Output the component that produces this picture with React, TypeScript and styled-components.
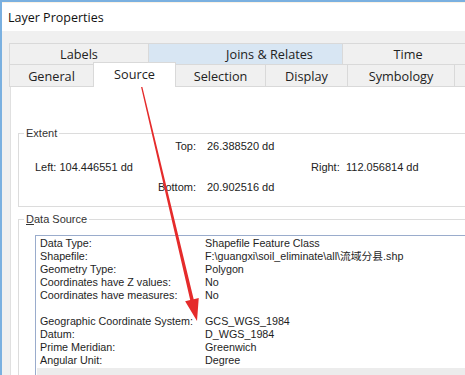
import * as React from "react";
import styled, { createGlobalStyle } from "styled-components";

const GlobalStyle = createGlobalStyle`
	html, body {
		margin: 0;
		padding: 0;
		overflow: hidden;
		background: #f0f0f0;
	}
`;

const Window = styled.div`
	position: relative;
	width: 463px;
	height: 373px;
	overflow: hidden;
	border-top: 2px solid #7ab0e0;
	border-left: 2px solid #7ab0e0;
	background: #f0f0f0;
	font-family: "Liberation Sans", "Noto Sans CJK SC", sans-serif;
	color: #1a1a1a;
`;

const TitleBar = styled.div`
	height: 28px;
	display: flex;
	align-items: center;
	padding-left: 6px;
	background: #ffffff;
	border-top: 1px solid #fbf2e4;
	font-family: "Open Sans", "Liberation Sans", sans-serif;
	font-size: 12.5px;
	color: #111;
`;

const Body = styled.div`
	padding: 12px 0 0 8px;
	width: 560px;
`;

const TabRow = styled.div<{ $h: number }>`
	display: flex;
	height: ${(p) => p.$h}px;
	align-items: stretch;
`;

const Tab = styled.div<{ $w: number; $active?: boolean; $hover?: boolean; $indent?: number }>`
	box-sizing: border-box;
	width: ${(p) => p.$w}px;
	flex: none;
	display: flex;
	align-items: center;
	justify-content: center;
	padding-left: ${(p) => p.$indent ?? 0}px;
	padding-bottom: ${(p) => (p.$active ? 3 : 0)}px;
	margin-top: ${(p) => (p.$active ? -2 : 0)}px;
	border: 1px solid #d9d9d9;
	border-bottom: ${(p) => (p.$active ? "none" : "1px solid #d9d9d9")};
	margin-left: -1px;
	background: ${(p) => (p.$active ? "#ffffff" : p.$hover ? "#d8e6f3" : "#f0f0f0")};
	font-family: "Open Sans", "Liberation Sans", sans-serif;
	font-size: 12.7px;
	color: #222;
	position: relative;
	z-index: ${(p) => (p.$active ? 1 : 0)};
`;

const Panel = styled.div`
	background: #ffffff;
	border-left: 1px solid #e0e0e0;
	margin-top: -1px;
	padding: 47px 0 0 7px;
	height: 300px;
	font-size: 11px;
`;

const GroupBox = styled.div<{ $gap?: number }>`
	border: 1px solid #dcdcdc;
	border-right: none;
	margin-top: ${(p) => p.$gap ?? 0}px;
	padding-bottom: ${(p) => (p.$gap ? 0 : 9)}px;
`;

const Caption = styled.div`
	width: fit-content;
	margin: -7px 0 -6px 5px;
	padding: 0 2px;
	background: #ffffff;
	line-height: 13px;
	font-size: 11px;
	color: #333;

	u {
		text-decoration: underline;
	}
`;

const ExtentGrid = styled.div`
	display: grid;
	grid-template-columns: 161px 11px 104px 35px 1fr;
	grid-template-rows: 20px 21px 20px;
	align-items: center;
	padding: 2px 0 0 16px;
	font-size: 11px;
	color: #222;
	white-space: nowrap;
`;

const Cell = styled.span<{ $col: number; $row: number; $right?: boolean }>`
	grid-column: ${(p) => p.$col};
	grid-row: ${(p) => p.$row};
	text-align: ${(p) => (p.$right ? "right" : "left")};
`;

const ListBox = styled.div`
	margin: 15px 0 0 16px;
	border: 1px solid #9aaccc;
	border-right: none;
	background: #ffffff;
	padding: 1px 0 0 4px;
	height: 200px;
`;

const InfoRow = styled.div`
	display: grid;
	grid-template-columns: 165px 1fr;
	height: 13px;
	line-height: 13px;
	font-size: 10.75px;
	color: #1e1e1e;
	white-space: nowrap;
`;

const Blank = styled.div`
	height: 13px;
`;

const ScrollStrip = styled.div`
	margin: 1px 0 0 -3px;
	height: 12px;
	background: #ececec;
`;

const Arrow = styled.svg`
	position: absolute;
	left: -2px;
	top: -2px;
	pointer-events: none;
`;

const rows1 = [
	{ label: "Labels", w: 140 },
	{ label: "Joins & Relates", w: 195, hover: true, indent: 48 },
	{ label: "Time", w: 132 },
];

const rows2 = [
	{ label: "General", w: 85 },
	{ label: "Source", w: 83, active: true },
	{ label: "Selection", w: 91 },
	{ label: "Display", w: 83 },
	{ label: "Symbology", w: 108 },
	{ label: "", w: 60 },
];

const info: ([string, string] | null)[] = [
	["Data Type:", "Shapefile Feature Class"],
	["Shapefile:", "F:\\guangxi\\soil_eliminate\\all\\流域分县.shp"],
	["Geometry Type:", "Polygon"],
	["Coordinates have Z values:", "No"],
	["Coordinates have measures:", "No"],
	null,
	["Geographic Coordinate System:", "GCS_WGS_1984"],
	["Datum:", "D_WGS_1984"],
	["Prime Meridian:", "Greenwich"],
	["Angular Unit:", "Degree"],
];

const App = () => {
	return (
		<React.Fragment>
			<GlobalStyle />
			<Window>
				<TitleBar>Layer Properties</TitleBar>
				<Body>
					<TabRow $h={22}>
						{rows1.map((t) => (
							<Tab key={t.label} $w={t.w} $hover={t.hover} $indent={t.indent}>
								{t.label}
							</Tab>
						))}
					</TabRow>
					<TabRow $h={23} style={{ marginTop: -1 }}>
						{rows2.map((t, i) => (
							<Tab key={i} $w={t.w} $active={t.active}>
								{t.label}
							</Tab>
						))}
					</TabRow>
					<Panel>
						<GroupBox>
							<Caption>Extent</Caption>
							<ExtentGrid>
								<Cell $col={1} $row={1} $right>Top:</Cell>
								<Cell $col={3} $row={1}>26.388520 dd</Cell>
								<Cell $col={1} $row={2}>Left: 104.446551 dd</Cell>
								<Cell $col={4} $row={2}>Right:</Cell>
								<Cell $col={5} $row={2}>112.056814 dd</Cell>
								<Cell $col={1} $row={3} $right>Bottom:</Cell>
								<Cell $col={3} $row={3}>20.902516 dd</Cell>
							</ExtentGrid>
						</GroupBox>
						<GroupBox $gap={12}>
							<Caption>
								<u>D</u>ata Source
							</Caption>
							<ListBox>
								{info.map((r, i) =>
									r ? (
										<InfoRow key={i}>
											<span>{r[0]}</span>
											<span>{r[1]}</span>
										</InfoRow>
									) : (
										<Blank key={i} />
									)
								)}
								<ScrollStrip />
							</ListBox>
						</GroupBox>
					</Panel>
				</Body>
				<Arrow width="465" height="375" viewBox="0 0 465 375">
					<polygon
						points="140.42,84.14 141.58,83.86 193.69,299.19 198.75,297.99 197,321 185.13,301.21 190.19,300.01"
						fill="#e52b2b"
					/>
				</Arrow>
			</Window>
		</React.Fragment>
	);
};

export default App;
